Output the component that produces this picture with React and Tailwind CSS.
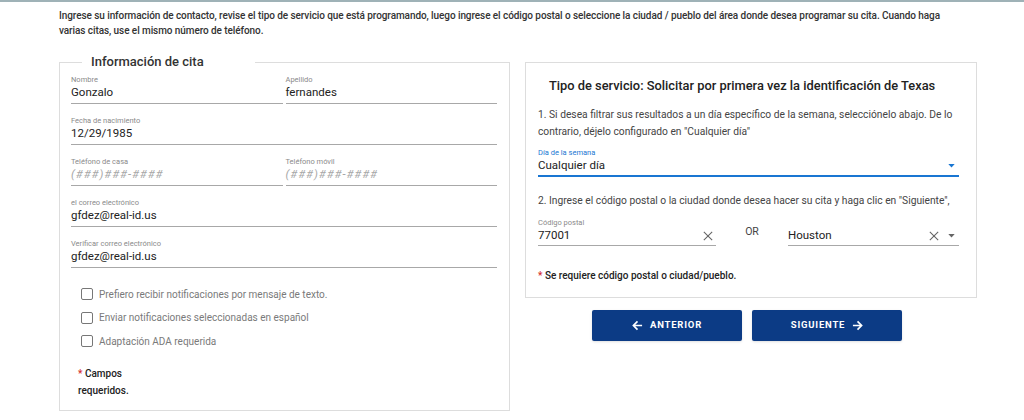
import React from 'react';

const Field = ({ label, value, placeholder, className = '' }) => (
    <div className={`flex flex-col border-b border-[#a8a8a8] pb-[1.5px] ${className}`}>
        <span className="text-[7.5px] leading-[9px] text-[#8a8a8a]">{label}</span>
        <span
            className={`text-[11.5px] leading-[17px] ${placeholder ? 'text-[#a8a8a8] italic tracking-[1px]' : 'text-[#222]'}`}
        >
            {value || placeholder}
        </span>
    </div>
);

const Check = ({ label }) => (
    <label className="flex items-center gap-[6px] h-[23.5px]">
        <span className="w-[12px] h-[12px] border border-[#777] rounded-[2px] bg-white" />
        <span className="text-[10px] text-[#7a7a7a]">{label}</span>
    </label>
);

const CloseIcon = () => (
    <svg width="10" height="10" viewBox="0 0 12 12" className="text-[#666]">
        <path d="M1 1L11 11M11 1L1 11" stroke="currentColor" strokeWidth="1.3" />
    </svg>
);

const Caret = ({ color = '#666' }) => (
    <svg width="7" height="4" viewBox="0 0 8 5">
        <path d="M0 0H8L4 4.5Z" fill={color} />
    </svg>
);

const ArrowLeft = () => (
    <svg width="11" height="11" viewBox="0 0 12 12" fill="none">
        <path d="M11 6H1.5M6 1.5L1.5 6L6 10.5" stroke="white" strokeWidth="1.8" />
    </svg>
);

const ArrowRight = () => (
    <svg width="11" height="11" viewBox="0 0 12 12" fill="none">
        <path d="M1 6H10.5M6 1.5L10.5 6L6 10.5" stroke="white" strokeWidth="1.8" />
    </svg>
);

export default function App() {
    return (
        <div className="w-[1024px] h-[420px] bg-white border-t-2 border-[#9fb2b7] font-['Roboto',sans-serif] overflow-hidden">
            {/* Intro */}
            <p className="pl-[59px] pr-[62px] pt-[6px] text-[10px] leading-[15px] font-medium text-[#333] tracking-[-0.08px]">
                Ingrese su información de contacto, revise el tipo de servicio que está programando, luego ingrese el código postal o seleccione la ciudad / pueblo del área donde desea programar su cita. Cuando haga varias citas, use el mismo número de teléfono.
            </p>

            <div className="flex items-start gap-[15px] pl-[59px] mt-[16px]">
                {/* Left: contact info */}
                <fieldset className="w-[451px] h-[357px] border border-[#ddd] pl-[11px] pr-[12px]">
                    <legend className="ml-[11px] w-[173px] pl-[9px] text-[13px] font-medium text-[#333] leading-[16px]">
                        Información de cita
                    </legend>
                    <div className="flex flex-col gap-[12.5px] mt-[5px]">
                        <div className="flex gap-[3px]">
                            <Field className="flex-1" label="Nombre" value="Gonzalo" />
                            <Field className="flex-1" label="Apellido" value="fernandes" />
                        </div>
                        <Field label="Fecha de nacimiento" value="12/29/1985" />
                        <div className="flex gap-[3px]">
                            <Field className="flex-1" label="Teléfono de casa" placeholder="(###)###-####" />
                            <Field className="flex-1" label="Teléfono móvil" placeholder="(###)###-####" />
                        </div>
                        <Field label="el correo electrónico" value="gfdez@real-id.us" />
                        <Field label="Verificar correo electrónico" value="gfdez@real-id.us" />
                    </div>
                    <div className="flex flex-col pl-[10px] mt-[15px]">
                        <Check label="Prefiero recibir notificaciones por mensaje de texto." />
                        <Check label="Enviar notificaciones seleccionadas en español" />
                        <Check label="Adaptación ADA requerida" />
                    </div>
                    <p className="pl-[7px] mt-[13px] text-[10px] leading-[16.5px] font-medium text-[#222]">
                        <span className="text-[#d32f2f]">*</span> Campos
                        <br />
                        requeridos.
                    </p>
                </fieldset>

                {/* Right: service */}
                <div className="flex flex-col items-start mt-[8px]">
                    <div className="w-[452px] h-[236px] border border-[#ddd] px-[12px]">
                        <h2 className="pl-[11px] mt-[14px] text-[12.85px] font-medium text-[#222] leading-[18px]">
                            Tipo de servicio: Solicitar por primera vez la identificación de Texas
                        </h2>
                        <p className="mt-[11px] text-[10.25px] leading-[17px] text-[#444]">
                            1. Si desea filtrar sus resultados a un día específico de la semana, selecciónelo abajo. De lo contrario, déjelo configurado en "Cualquier día"
                        </p>
                        <div className="mt-[8px] flex flex-col border-b-2 border-[#1976d2] w-[421px] pb-[1px]">
                            <span className="text-[7.5px] leading-[9px] text-[#1976d2]">Día de la semana</span>
                            <div className="flex items-center justify-between pr-[4px]">
                                <span className="text-[11.5px] leading-[17px] text-[#222]">Cualquier día</span>
                                <Caret color="#1976d2" />
                            </div>
                        </div>
                        <p className="mt-[15px] text-[10.25px] leading-[17px] text-[#444]">
                            2. Ingrese el código postal o la ciudad donde desea hacer su cita y haga clic en "Siguiente",
                        </p>
                        <div className="mt-[9px] flex items-end w-[421px]">
                            <div className="w-[178px] flex flex-col border-b border-[#a8a8a8] pb-[1px]">
                                <span className="text-[7.5px] leading-[9px] text-[#8a8a8a]">Código postal</span>
                                <div className="flex items-center justify-between pr-[3px]">
                                    <span className="text-[11.5px] leading-[17px] text-[#222]">77001</span>
                                    <CloseIcon />
                                </div>
                            </div>
                            <span className="w-[72px] text-center text-[10.5px] text-[#444] pb-[6px]">OR</span>
                            <div className="flex-1 flex items-center justify-between border-b border-[#a8a8a8] pr-[4px] pb-[1px]">
                                <span className="text-[11.5px] leading-[17px] text-[#222]">Houston</span>
                                <div className="flex items-center gap-[9px]">
                                    <CloseIcon />
                                    <Caret />
                                </div>
                            </div>
                        </div>
                        <p className="mt-[22px] text-[10px] leading-[15px] font-medium text-[#222]">
                            <span className="text-[#d32f2f]">*</span> Se requiere código postal o ciudad/pueblo.
                        </p>
                    </div>
                    <div className="flex gap-[10px] ml-[67px] mt-[12px]">
                        <button className="w-[150px] h-[31px] bg-[#0c3b85] rounded-[2px] shadow-sm flex items-center justify-center gap-[7px] text-white text-[9.5px] font-bold tracking-[0.8px]">
                            <ArrowLeft /> ANTERIOR
                        </button>
                        <button className="w-[150px] h-[31px] bg-[#0c3b85] rounded-[2px] shadow-sm flex items-center justify-center gap-[7px] text-white text-[9.5px] font-bold tracking-[0.8px]">
                            SIGUIENTE <ArrowRight />
                        </button>
                    </div>
                </div>
            </div>
        </div>
    );
}
